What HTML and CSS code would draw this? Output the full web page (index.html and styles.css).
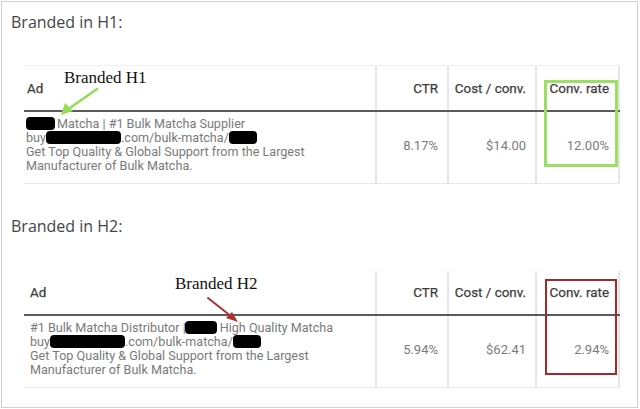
FILE: index.html
```html
<!DOCTYPE html>
<html>
<head>
<meta charset="utf-8">
<link rel="stylesheet" href="styles.css">
</head>
<body>
<div class="frame">
  <section class="section">
    <h2 class="title">Branded in H1:</h2>
    <div class="table">
      <div class="thead">
        <div class="cell cell-ad">Ad</div>
        <div class="cell cell-num">CTR</div>
        <div class="cell cell-num">Cost / conv.</div>
        <div class="cell cell-num cell-last">Conv. rate</div>
      </div>
      <div class="tbody">
        <div class="cell cell-ad ad-text">
          <div><span class="redact r-a"></span>Matcha | #1 Bulk Matcha Supplier</div>
          <div>buy<span class="redact r-b"></span>.com/bulk-matcha/<span class="redact r-c"></span></div>
          <div>Get Top Quality &amp; Global Support from the Largest</div>
          <div>Manufacturer of Bulk Matcha.</div>
        </div>
        <div class="cell cell-num val">8.17%</div>
        <div class="cell cell-num val">$14.00</div>
        <div class="cell cell-num val cell-last">12.00%</div>
      </div>
      <div class="note note-h1">Branded H1</div>
      <svg class="arrow" width="595" height="120" viewBox="0 0 595 120">
        <line x1="73" y1="23" x2="43" y2="44" stroke="#93dc58" stroke-width="2.5" stroke-linecap="round"/>
        <polygon points="37,49 41,37 49,45" fill="#93dc58"/>
      </svg>
      <div class="mark mark-green"></div>
    </div>
  </section>
  <section class="section section-2">
    <h2 class="title">Branded in H2:</h2>
    <div class="table table-2">
      <div class="thead">
        <div class="cell cell-ad">Ad</div>
        <div class="cell cell-num">CTR</div>
        <div class="cell cell-num">Cost / conv.</div>
        <div class="cell cell-num cell-last">Conv. rate</div>
      </div>
      <div class="tbody">
        <div class="cell cell-ad ad-text">
          <div>#1 Bulk Matcha Distributor |<span class="redact r-d"></span>High Quality Matcha</div>
          <div>buy<span class="redact r-b"></span>.com/bulk-matcha/<span class="redact r-c"></span></div>
          <div>Get Top Quality &amp; Global Support from the Largest</div>
          <div>Manufacturer of Bulk Matcha.</div>
        </div>
        <div class="cell cell-num val">5.94%</div>
        <div class="cell cell-num val">$62.41</div>
        <div class="cell cell-num val cell-last">2.94%</div>
      </div>
      <div class="note note-h2">Branded H2</div>
      <svg class="arrow" width="595" height="120" viewBox="0 0 595 120">
        <line x1="184" y1="27" x2="208" y2="46" stroke="#b03030" stroke-width="2" stroke-linecap="round"/>
        <polygon points="214,51 202,47 208,41" fill="#b03030"/>
      </svg>
      <div class="mark mark-red"></div>
    </div>
  </section>
</div>
</body>
</html>
```

FILE: styles.css
```css
* { box-sizing: border-box; }
html, body { margin: 0; padding: 0; background: #fff; }
body { width: 640px; height: 409px; overflow: hidden; }

.frame {
  margin: 1px;
  width: 637px;
  height: 407px;
  border: 1px solid #cfcfcf;
  padding: 8px 0 0 9px;
}

.title {
  margin: 0;
  font-family: "Open Sans", "Liberation Sans", sans-serif;
  font-weight: 400;
  font-size: 16px;
  line-height: 24px;
  color: #454545;
}

.section-2 { margin-top: 30px; }

.table {
  position: relative;
  margin-top: 31px;
  margin-left: 13px;
  width: 596px;
  border-top: 1px solid #f0f0f0;
  font-family: Roboto, "Liberation Sans", sans-serif;
}
.table-2 { margin-top: 32px; border-top-color: #fff; }

.thead, .tbody {
  display: grid;
  grid-template-columns: 351px 72px 88px 85px;
}
.thead {
  height: 46px;
  border-bottom: 2px solid #5b5b5b;
  font-size: 13.4px;
  font-weight: 400;
  color: #3c3c3c;
  -webkit-text-stroke: 0.25px #3c3c3c;
}
.table-2 .thead { height: 45px; }
.tbody {
  height: 72px;
  border-bottom: 1px solid #e8e8e8;
}

.cell {
  display: flex;
  align-items: center;
  padding: 0 9px 0 3px;
}
.cell-num {
  justify-content: flex-end;
  border-left: 2px solid #e6e6e6;
}
.cell-last { border-right: 2px solid #e6e6e6; }
.table-2 .cell-ad { padding-left: 6px; }

.ad-text {
  display: block;
  padding-top: 5px;
  padding-left: 2px;
  font-size: 12.6px;
  line-height: 14px;
  color: #7a7a7a;
}
.val {
  font-size: 13px;
  color: #7b7b7b;
  padding-bottom: 4px;
}

.redact {
  display: inline-block;
  height: 13px;
  background: #000;
  border-radius: 4px;
  vertical-align: -2px;
}
.r-a { width: 29px; margin-right: 2px; }
.r-b { width: 75px; }
.r-c { width: 28px; }
.r-d { width: 32px; margin: 0 3px 0 -1px; }

.note {
  position: absolute;
  font-family: "Liberation Serif", "Times New Roman", serif;
  font-size: 17px;
  line-height: 20px;
  color: #111;
}
.note-h1 { left: 40px; top: 2px; }
.note-h2 { left: 151px; top: 3px; }

.arrow {
  position: absolute;
  left: 0;
  top: 0;
  pointer-events: none;
}

.mark {
  position: absolute;
}
.mark-green {
  left: 520px;
  top: 14px;
  width: 74px;
  height: 87px;
  border: 3px solid #9be064;
}
.mark-red {
  left: 521px;
  top: 8px;
  width: 72px;
  height: 96px;
  border: 2px solid #a52828;
}
```
